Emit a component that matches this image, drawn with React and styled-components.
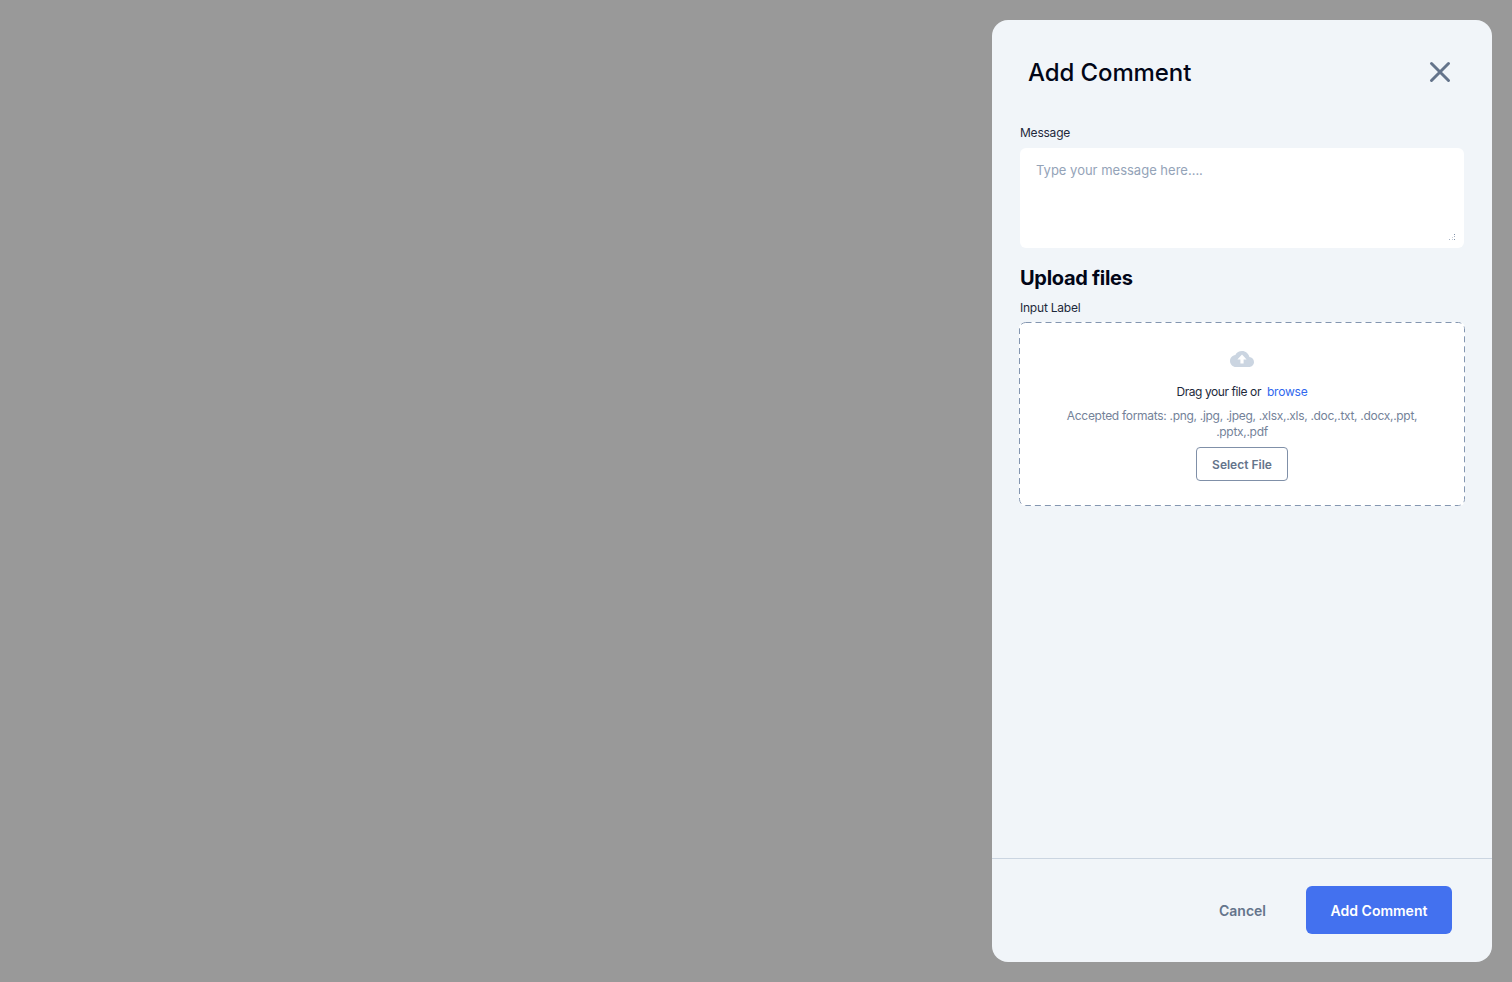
import React from 'react'
import styled, { createGlobalStyle } from 'styled-components'

const GlobalStyle = createGlobalStyle`
  html, body {
    margin: 0;
    padding: 0;
    height: 100%;
  }
  body {
    font-family: Inter, "Liberation Sans", sans-serif;
    background: #999999;
  }
  * {
    box-sizing: border-box;
  }
`

const dashedBorder = `url("data:image/svg+xml,%3Csvg xmlns='http://www.w3.org/2000/svg' width='446' height='184'%3E%3Crect x='.5' y='.5' width='445' height='183' rx='6' fill='none' stroke='%238496b0' stroke-dasharray='6 4'/%3E%3C/svg%3E")`

const Overlay = styled.div`
  height: 982px;
  padding: 20px;
  display: flex;
  justify-content: flex-end;
  background: #999999;
`

const Drawer = styled.div`
  width: 500px;
  height: 942px;
  display: flex;
  flex-direction: column;
  background: #f1f5f9;
  border-radius: 16px;
`

const Header = styled.div`
  height: 105px;
  padding: 0 40px 1px 36px;
  display: flex;
  align-items: center;
  justify-content: space-between;
`

const Title = styled.h2`
  margin: 2px 0 0;
  font-size: 24px;
  line-height: 32px;
  font-weight: 500;
  letter-spacing: -0.1px;
  color: #020617;
`

const CloseButton = styled.button`
  width: 24px;
  height: 24px;
  padding: 0;
  border: 0;
  background: none;
  display: flex;
  color: #64748b;
`

const Body = styled.div`
  flex: 1;
  padding: 0 27px 0 28px;
  display: flex;
  flex-direction: column;
`

const Label = styled.label`
  display: block;
  font-size: 12px;
  line-height: 16px;
  letter-spacing: -0.22px;
  color: #1e293b;
  margin-bottom: 6px;
`

const MessageBox = styled.div`
  position: relative;
  width: 444px;
  height: 100px;
  margin-top: 1px;
`

const Message = styled.textarea`
  display: block;
  width: 100%;
  height: 100%;
  padding: 14px 16px;
  border: 0;
  outline: 0;
  resize: none;
  border-radius: 6px;
  background: #fff;
  font-family: inherit;
  font-size: 13px;
  line-height: 16px;
  color: #0f172a;

  &::placeholder {
    color: #94a3b8;
    opacity: 1;
  }
`

const ResizeGrip = styled.svg`
  position: absolute;
  right: 8px;
  bottom: 8px;
  width: 7px;
  height: 6px;
  color: #7f8fa6;
`

const SectionTitle = styled.h3`
  margin: 18px 0 10px;
  font-size: 20px;
  line-height: 24px;
  font-weight: 700;
  letter-spacing: -0.3px;
  color: #020617;
`

const Dropzone = styled.div`
  width: 446px;
  height: 184px;
  margin-left: -1px;
  padding-top: 29px;
  display: flex;
  flex-direction: column;
  align-items: center;
  background: #fff ${dashedBorder} no-repeat;
  border-radius: 6px;
`

const UploadIcon = styled.svg`
  display: block;
  width: 24px;
  height: 16px;
  color: #cbd5e1;
`

const DropText = styled.div`
  margin-top: 17px;
  font-size: 12px;
  line-height: 16px;
  letter-spacing: -0.42px;
  color: #1e293b;
`

const Browse = styled.a`
  margin-left: 3px;
  letter-spacing: -0.2px;
  color: #2f68ee;
`

const Formats = styled.div`
  width: 372px;
  margin-top: 8px;
  text-align: center;
  font-size: 12px;
  line-height: 16px;
  letter-spacing: -0.3px;
  color: #748299;
`

const SelectButton = styled.button`
  width: 92px;
  height: 34px;
  margin-top: 7px;
  padding: 0;
  background: #fff;
  border: 1px solid #8090a8;
  border-radius: 4px;
  font-family: inherit;
  font-size: 12px;
  font-weight: 600;
  color: #64748b;
`

const Footer = styled.div`
  height: 104px;
  padding: 27px 40px 0 0;
  display: flex;
  justify-content: flex-end;
  align-items: flex-start;
  gap: 24px;
  border-top: 1px solid #cbd5e1;
`

const FooterButton = styled.button`
  height: 48px;
  padding: 0;
  width: ${(p) => (p.$primary ? '146px' : '79px')};
  border: 0;
  border-radius: 6px;
  background: ${(p) => (p.$primary ? '#4371ef' : 'transparent')};
  color: ${(p) => (p.$primary ? '#fff' : '#64748b')};
  font-family: inherit;
  font-size: 14px;
  font-weight: 600;
`

export default function App() {
  return (
    <>
      <GlobalStyle />
      <Overlay>
        <Drawer>
          <Header>
            <Title>Add Comment</Title>
            <CloseButton aria-label="Close">
              <svg width="24" height="24" viewBox="0 0 24 24" fill="none">
                <path d="M3.5 3.5 20.5 20.5M20.5 3.5 3.5 20.5" stroke="currentColor" strokeWidth="3" strokeLinecap="round" />
              </svg>
            </CloseButton>
          </Header>
          <Body>
            <Label>Message</Label>
            <MessageBox>
              <Message placeholder="Type your message here...." />
              <ResizeGrip viewBox="0 0 7 6" fill="currentColor">
                <rect x="5" y="0" width="1" height="1" />
                <rect x="5" y="2" width="1" height="1" opacity="0.7" />
                <rect x="3" y="3" width="1" height="1" opacity="0.4" />
                <rect x="0" y="5" width="1" height="1" opacity="0.7" />
                <rect x="3" y="5" width="1" height="1" opacity="0.5" />
                <rect x="5" y="5" width="1" height="1" />
              </ResizeGrip>
            </MessageBox>
            <SectionTitle>Upload files</SectionTitle>
            <Label>Input Label</Label>
            <Dropzone>
              <UploadIcon viewBox="0 0 24 16" fill="none">
                <path
                  d="M19.4 6.1C18.7 2.6 15.6 0 12 0 9.1 0 6.6 1.6 5.3 4 2.3 4.4 0 6.9 0 10c0 3.3 2.7 6 6 6h13c2.8 0 5-2.2 5-5 0-2.6-2.1-4.7-4.6-4.9Z"
                  fill="currentColor"
                />
                <path d="M12 3.4 7.4 8.4H10.4V12.6H13.6V8.4H16.6L12 3.4Z" fill="#fff" />
              </UploadIcon>
              <DropText>
                Drag your file or <Browse>browse</Browse>
              </DropText>
              <Formats>Accepted formats: .png, .jpg, .jpeg, .xlsx,.xls, .doc,.txt, .docx,.ppt, .pptx,.pdf</Formats>
              <SelectButton>Select File</SelectButton>
            </Dropzone>
          </Body>
          <Footer>
            <FooterButton>Cancel</FooterButton>
            <FooterButton $primary>Add Comment</FooterButton>
          </Footer>
        </Drawer>
      </Overlay>
    </>
  )
}
